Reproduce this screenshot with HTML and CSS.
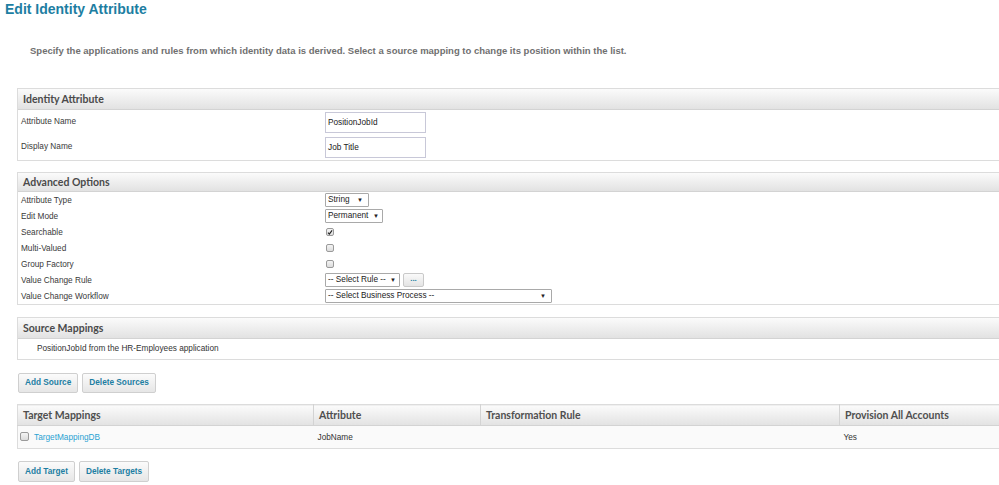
FILE: index.html
```html
<!DOCTYPE html>
<html>
<head>
<meta charset="utf-8">
<link rel="stylesheet" href="styles.css">
</head>
<body>
<div class="page">
  <h1 class="title">Edit Identity Attribute</h1>
  <p class="intro">Specify the applications and rules from which identity data is derived. Select a source mapping to change its position within the list.</p>

  <section class="panel">
    <div class="panel-head">Identity Attribute</div>
    <div class="rows rows-tall">
      <div class="label">Attribute Name</div>
      <div class="field"><span class="textbox">PositionJobId</span></div>
      <div class="label">Display Name</div>
      <div class="field"><span class="textbox">Job Title</span></div>
    </div>
  </section>

  <section class="panel panel-adv">
    <div class="panel-head head-adv">Advanced Options</div>
    <div class="rows rows-short">
      <div class="label">Attribute Type</div>
      <div class="field"><span class="select sel-string">String<span class="arrow">▼</span></span></div>
      <div class="label">Edit Mode</div>
      <div class="field"><span class="select sel-perm">Permanent<span class="arrow">▼</span></span></div>
      <div class="label">Searchable</div>
      <div class="field"><span class="cb checked"><svg viewBox="0 0 8 8" width="7" height="7"><path d="M1.3 4.2 L3.1 6.2 L6.8 1.2" fill="none" stroke="#222" stroke-width="1.5"/></svg></span></div>
      <div class="label">Multi-Valued</div>
      <div class="field"><span class="cb"></span></div>
      <div class="label">Group Factory</div>
      <div class="field"><span class="cb"></span></div>
      <div class="label">Value Change Rule</div>
      <div class="field"><span class="select sel-rule">-- Select Rule --<span class="arrow">▼</span></span><span class="dots">...</span></div>
      <div class="label">Value Change Workflow</div>
      <div class="field"><span class="select sel-bp">-- Select Business Process --<span class="arrow">▼</span></span></div>
    </div>
  </section>

  <section class="panel panel-src">
    <div class="panel-head">Source Mappings</div>
    <div class="src-row">PositionJobId from the HR-Employees application</div>
  </section>

  <div class="buttons">
    <span class="btn">Add Source</span>
    <span class="btn">Delete Sources</span>
  </div>

  <table class="grid">
    <thead>
      <tr>
        <th class="c1">Target Mappings</th>
        <th class="c2">Attribute</th>
        <th class="c3">Transformation Rule</th>
        <th class="c4">Provision All Accounts</th>
      </tr>
    </thead>
    <tbody>
      <tr>
        <td class="c1"><span class="cb cb-row"></span><a class="link">TargetMappingDB</a></td>
        <td class="c2">JobName</td>
        <td class="c3"></td>
        <td class="c4">Yes</td>
      </tr>
    </tbody>
  </table>

  <div class="buttons buttons-last">
    <span class="btn btn-tall">Add Target</span>
    <span class="btn btn-tall">Delete Targets</span>
  </div>
</div>
</body>
</html>
```

FILE: styles.css
```css
html, body {
  margin: 0;
  padding: 0;
  background: #ffffff;
  overflow: hidden;
}
body {
  font-family: "Liberation Sans", Arial, sans-serif;
  color: #333;
}
.page {
  width: 1160px;
}
.title {
  margin: 0;
  padding: 1px 0 0 5px;
  font-size: 14px;
  line-height: 17px;
  font-weight: bold;
  color: #1d7ea2;
}
.intro {
  margin: 0;
  padding: 27px 0 0 30px;
  height: 15px;
  font-size: 9.5px;
  line-height: 12px;
  font-weight: bold;
  color: #707070;
}
.panel {
  margin: 28px 0 0 17px;
  border: 1px solid #dcdcdc;
  border-right: none;
}
.panel-adv { margin-top: 11px; }
.panel-src { margin-top: 12px; }
.panel-head {
  height: 20px;
  line-height: 20px;
  padding-left: 5px;
  font-family: "Lato", "Open Sans", "Liberation Sans", sans-serif;
  font-size: 10.5px;
  font-weight: bold;
  color: #4a4a4a;
  background: linear-gradient(#fbfbfb, #e2e2e2);
  border-bottom: 1px solid #d3d3d3;
}
.head-adv {
  height: 18px;
  line-height: 18px;
}
.rows {
  display: grid;
  grid-template-columns: 307px 1fr;
}
.label {
  padding-left: 3px;
  font-size: 8.25px;
  color: #3a3a3a;
  display: flex;
  align-items: center;
}
.field {
  display: flex;
  align-items: center;
  gap: 3px;
}
.rows-tall .label, .rows-tall .field { height: 25px; }
.rows-tall .label { padding-bottom: 2px; box-sizing: border-box; }
.rows-short .label, .rows-short .field { height: 16px; }
.textbox {
  box-sizing: border-box;
  width: 101px;
  height: 21px;
  margin-top: -1px;
  border: 1px solid #c8c8d8;
  padding-left: 2px;
  font-size: 8.25px;
  line-height: 19px;
  color: #222;
}
.select {
  box-sizing: border-box;
  height: 14px;
  border: 1px solid #a9a9a9;
  border-radius: 1px;
  padding-left: 2px;
  font-size: 8.25px;
  line-height: 12px;
  color: #222;
  display: inline-flex;
  justify-content: space-between;
  background: #fff;
  white-space: nowrap;
}
.arrow {
  font-size: 6px;
  padding-right: 5px;
  color: #222;
}
.sel-string { width: 44px; }
.sel-perm { width: 58px; }
.sel-perm .arrow { padding-right: 3px; }
.sel-rule { width: 75px; }
.sel-rule .arrow { padding-right: 3px; }
.sel-bp { width: 227px; }
.dots {
  box-sizing: border-box;
  width: 21px;
  height: 14px;
  border: 1px solid #c9c9c9;
  border-radius: 2px;
  background: linear-gradient(#fafafa, #e4e4e4);
  color: #1d7ea2;
  font-size: 8px;
  font-weight: bold;
  line-height: 9px;
  text-align: center;
}
.cb {
  box-sizing: border-box;
  display: inline-flex;
  align-items: center;
  justify-content: center;
  width: 8px;
  height: 8px;
  margin-left: 1px;
  border: 1px solid #9a9a9a;
  border-radius: 2px;
  background: linear-gradient(#f4f4f4, #dcdcdc);
}
.cb.checked { background: linear-gradient(#f4f4f4, #e0e0e0); }
.src-row {
  height: 20px;
  line-height: 20px;
  padding-left: 19px;
  font-size: 8.25px;
  color: #333;
}
.buttons {
  display: flex;
  gap: 4px;
  margin: 13px 0 0 18px;
}
.buttons-last { margin-top: 12px; }
.btn {
  box-sizing: border-box;
  height: 20px;
  line-height: 18px;
  padding: 0 6px;
  border: 1px solid #cfcfcf;
  border-radius: 2px;
  background: linear-gradient(#fbfbfb, #e6e6e6);
  color: #1d7ea2;
  font-size: 8.25px;
  font-weight: bold;
  white-space: nowrap;
}
.btn-tall { height: 21px; line-height: 19px; }
.grid {
  margin: 11px 0 0 17px;
  width: 1140px;
  border-collapse: collapse;
  table-layout: fixed;
  border-left: 1px solid #dcdcdc;
}
.grid th, .grid td { box-sizing: border-box; }
.grid th {
  height: 21px;
  padding: 0 0 0 5px;
  text-align: left;
  font-family: "Lato", "Open Sans", "Liberation Sans", sans-serif;
  font-size: 10.5px;
  font-weight: bold;
  color: #4f4f4f;
  background: linear-gradient(#fbfbfb, #e2e2e2);
  border-top: 1px solid #dcdcdc;
  border-bottom: 1px solid #d3d3d3;
  border-right: 1px solid #d3d3d3;
}
.grid td {
  height: 23px;
  padding: 0 0 0 4px;
  font-size: 8.25px;
  color: #333;
  background: #fafafa;
  border-bottom: 1px solid #dcdcdc;
}
.grid .c1 { width: 296px; }
.grid .c2 { width: 167px; }
.grid .c3 { width: 359px; }
.grid td.c1 { padding-left: 2px; }
.cb-row {
  width: 9px;
  height: 9px;
  margin: 0 5px 0 0;
  vertical-align: -1px;
}
.link {
  color: #2aa2d2;
  font-size: 8.25px;
}
```
